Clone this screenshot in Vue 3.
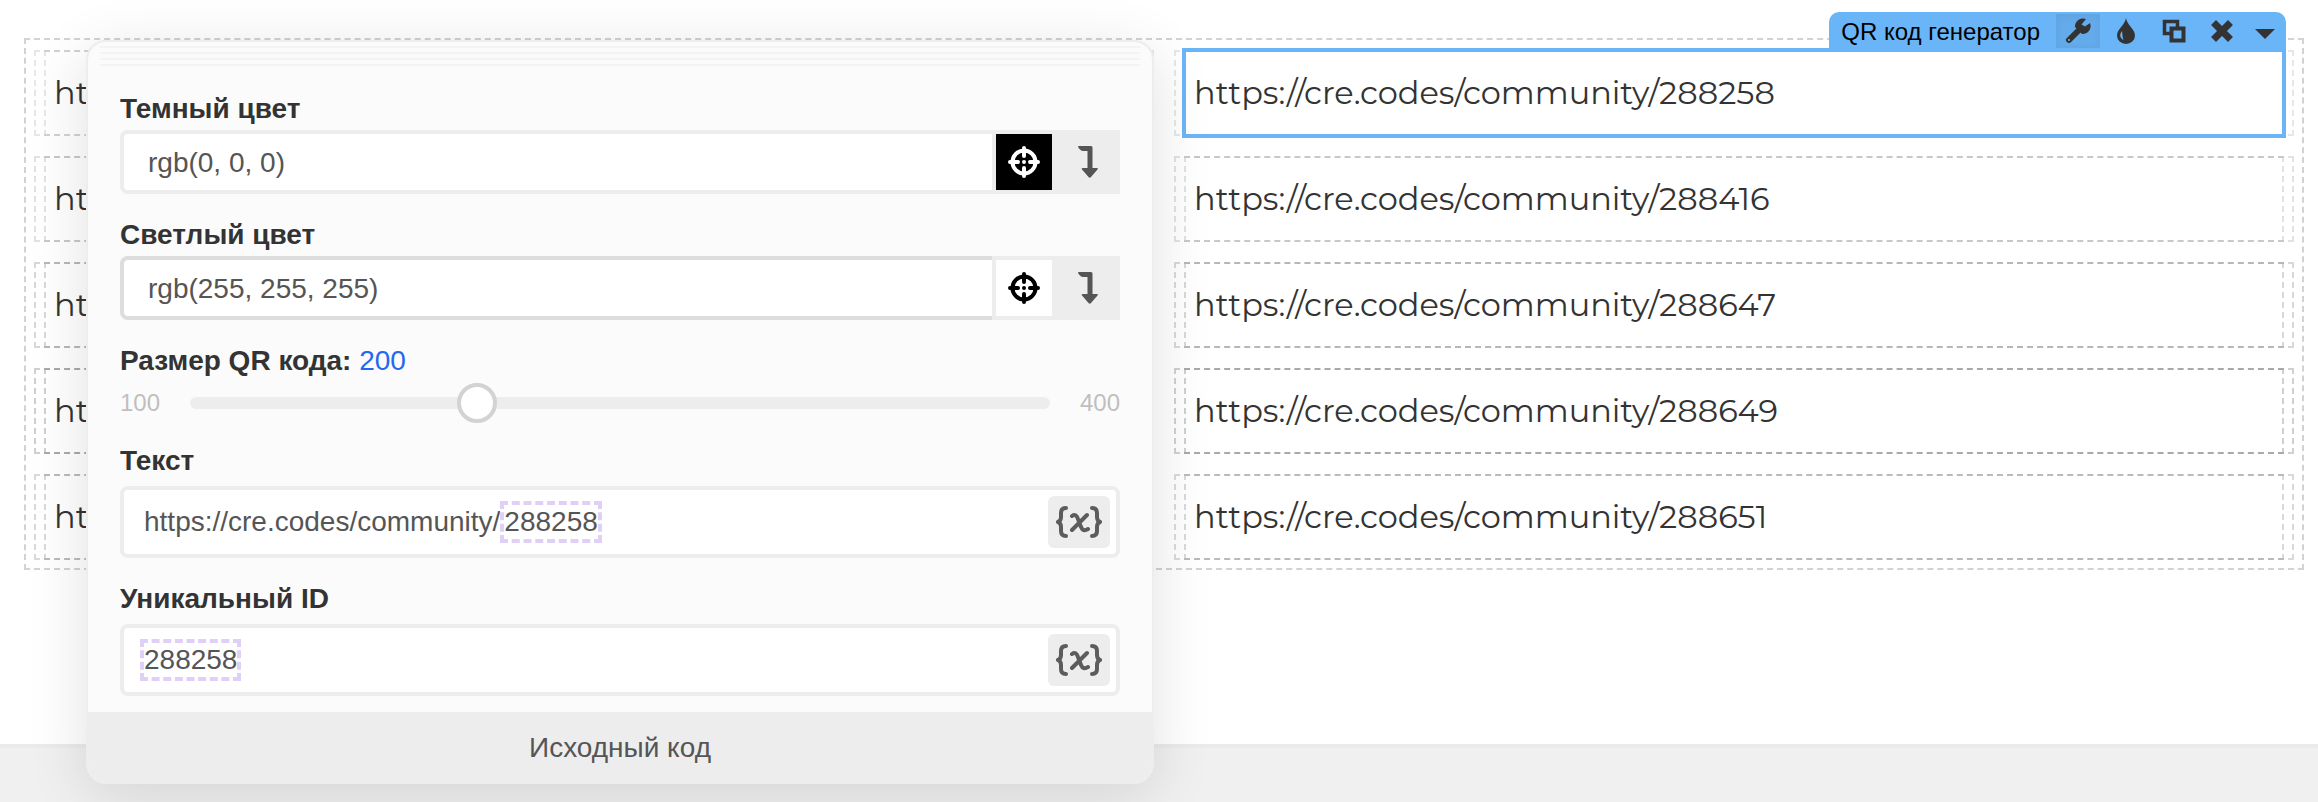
<template>
  <div class="editor">
    <main class="canvas">
      <div class="section">
        <div v-for="row in rows" :key="row.id" class="row" :style="{ '--tone': row.tone }">
          <div v-for="side in ['left', 'right']" :key="side" class="column">
            <div class="block" :class="{ selected: isSelected(row, side) }">
              <span class="block-text">{{ baseUrl }}{{ row.id }}</span>
              <div v-if="isSelected(row, side)" class="toolbar">
                <span class="toolbar-title">QR код генератор</span>
                <button type="button" class="tool active" aria-label="Настройки">
                  <svg width="26" height="26" viewBox="0 0 26 26">
                    <path d="M4 22 15 11" stroke="#333" stroke-width="6" stroke-linecap="round" />
                    <path d="M21 1A8 8 0 0 0 10 9l7 7A8 8 0 0 0 25 5l-5 3.500-3.500-2z" fill="#333" />
                    <circle cx="4" cy="22" r="1" fill="#6ab5f8" />
                  </svg>
                </button>
                <button type="button" class="tool" aria-label="Стиль">
                  <svg width="20" height="28" viewBox="0 0 20 28">
                    <path d="M10 1C9 8 1 12 1 18.500a9 8.500 0 0 0 18 0C19 12 11 8 10 1z" fill="#333" />
                    <path d="M6 14c-3 4-2 7 1.500 9-1-3-1-5-1.500-9z" fill="#6ab5f8" />
                  </svg>
                </button>
                <button type="button" class="tool" aria-label="Копировать">
                  <svg width="24" height="24" viewBox="0 0 24 24" fill="none" stroke="#333">
                    <path d="M8 14.500H2.500v-12h13V8" stroke-width="3.500" />
                    <path d="M9.500 9.500h12v12h-12z" stroke-width="4" />
                  </svg>
                </button>
                <button type="button" class="tool" aria-label="Удалить">
                  <svg width="22" height="22" viewBox="0 0 22 22">
                    <path d="M5 5l12 12M17 5 5 17" stroke="#333" stroke-width="7" stroke-linecap="square" />
                  </svg>
                </button>
                <button type="button" class="tool more" aria-label="Ещё">
                  <svg width="20" height="10" viewBox="0 0 20 10">
                    <path d="M0 0h20L10 10z" fill="#333" />
                  </svg>
                </button>
              </div>
            </div>
          </div>
        </div>
      </div>
    </main>

    <aside class="panel">
      <div class="grip"><i v-for="n in 4" :key="n"></i></div>

      <form class="fields" @submit.prevent>
        <div v-for="color in colors" :key="color.key" class="field">
          <label class="label" :for="color.key">{{ color.label }}</label>
          <div class="color-group">
            <input :id="color.key" v-model="color.value" type="text" class="color-input" :class="color.key">
            <button type="button" class="swatch" :class="color.key" aria-label="Выбрать цвет">
              <svg width="32" height="32" viewBox="0 0 32 32" fill="none" stroke="currentColor" stroke-width="4">
                <circle cx="16" cy="16" r="11.5" />
                <path d="M16 2v8M16 22v8M2 16h8M22 16h8" stroke-linecap="round" />
                <circle cx="16" cy="16" r="2" fill="currentColor" stroke="none" />
              </svg>
            </button>
            <button type="button" class="palette" aria-label="Палитра">
              <svg width="20" height="32" viewBox="0 0 20 32">
                <path d="M1 0h12q1.500 0 1.500 1.500V22H19q1.500 0 .5 1.500L13 31q-1 1.500-2.500 0L4 23.500Q3 22 5 22h4.500V5H5Q2.500 5 0 1q0-1 1-1z" fill="#555" />
              </svg>
            </button>
          </div>
        </div>

        <div class="field size-field">
          <label class="label" for="size">Размер QR кода: <span class="size-value">{{ size }}</span></label>
          <div class="slider">
            <span>100</span>
            <div class="track">
              <input id="size" v-model.number="size" type="range" min="100" max="400">
            </div>
            <span>400</span>
          </div>
        </div>

        <div class="field tagged">
          <label class="label" for="text">Текст</label>
          <div class="tag-box">
            <input id="text" v-model="baseUrl" type="text" class="tag-input fit">
            <span class="tag">{{ selectedId }}</span>
            <span class="spacer"></span>
            <button type="button" class="variable" aria-label="Переменная">
              <svg width="46" height="32" viewBox="0 0 46 32"><path :d="variableIcon" /></svg>
            </button>
          </div>
        </div>

        <div class="field tagged">
          <label class="label" for="uid">Уникальный ID</label>
          <div class="tag-box">
            <span class="tag">{{ selectedId }}</span>
            <input id="uid" type="text" class="tag-input spacer">
            <button type="button" class="variable" aria-label="Переменная">
              <svg width="46" height="32" viewBox="0 0 46 32"><path :d="variableIcon" /></svg>
            </button>
          </div>
        </div>
      </form>

      <button type="button" class="source">Исходный код</button>
    </aside>
  </div>
</template>

<script setup>
import { reactive, ref } from 'vue'

const baseUrl = ref('https://cre.codes/community/')
const selectedId = '288258'
const size = ref(200)

const rows = [
  { id: '288258', tone: 0.09 },
  { id: '288416', tone: 0.11 },
  { id: '288647', tone: 0.15 },
  { id: '288649', tone: 0.18 },
  { id: '288651', tone: 0.14 }
]

const colors = reactive([
  { key: 'dark', label: 'Темный цвет', value: 'rgb(0, 0, 0)' },
  { key: 'light', label: 'Светлый цвет', value: 'rgb(255, 255, 255)' }
])

const variableIcon =
  'M10 2Q5 2 5 7v4q0 4-3 5 3 1 3 5v4q0 5 5 5M36 2q5 0 5 5v4q0 4 3 5-3 1-3 5v4q0 5-5 5' +
  'M31 9 16 24M16 10q4-3 6 3l3 8q2 5 7 2'

function isSelected(row, side) {
  return side === 'right' && row.id === selectedId
}
</script>

<style>
body {
  margin: 0;
  background: #f0f0f0;
}
</style>

<style scoped>
.editor {
  position: relative;
  min-height: 100vh;
  overflow: hidden;
  font-family: "Helvetica Neue", "Liberation Sans", Arial, sans-serif;
  color: #333;
}

.editor * {
  box-sizing: border-box;
}

button,
input {
  margin: 0;
  padding: 0;
  border: 0;
  font: inherit;
  color: inherit;
  background: none;
  outline: none;
}

svg {
  display: block;
}

.canvas {
  padding: 38px 14px 174px 24px;
  border-bottom: 4px solid #ebebeb;
  background: #fff;
}

.section {
  display: flex;
  flex-direction: column;
  gap: 20px;
  padding: 10px 8px 8px;
  border: 2px dashed #d2d2d2;
}

.row {
  display: grid;
  grid-template-columns: 1fr 1fr;
  gap: 20px;
}

.column {
  padding: 0 10px;
  outline: 2px dashed rgba(0, 0, 0, var(--tone));
  outline-offset: -2px;
}

.block {
  position: relative;
  padding: 20px 10px;
  outline: 2px dashed rgba(0, 0, 0, var(--tone));
  outline-offset: -2px;
}

.block-text {
  display: block;
  font-family: Montserrat, Inter, sans-serif;
  font-size: 32px;
  line-height: 46px;
  white-space: nowrap;
}

.selected::before {
  content: "";
  position: absolute;
  inset: -2px;
  border: 4px solid #6ab5f8;
}

.toolbar {
  position: absolute;
  right: -2px;
  bottom: 100%;
  display: flex;
  gap: 4px;
  height: 38px;
  padding: 2px 4px 2px 12px;
  border-radius: 10px 10px 0 0;
  background: #6ab5f8;
}

.toolbar-title {
  margin-right: 12px;
  font-size: 24px;
  line-height: 36px;
  color: #000;
  white-space: nowrap;
}

.tool {
  display: flex;
  align-items: center;
  justify-content: center;
  width: 44px;
}

.tool.active {
  background: #64abec;
  box-shadow: inset 0 2px 8px rgba(0, 0, 0, 0.06);
}

.tool.more {
  width: 34px;
  padding-top: 6px;
}

.panel {
  position: absolute;
  top: 40px;
  left: 86px;
  width: 1068px;
  max-width: calc(100% - 172px);
  box-sizing: border-box;
  border: 2px solid #ededed;
  border-radius: 20px;
  background: #fbfbfb;
  box-shadow: 0 12px 60px rgba(0, 0, 0, 0.12);
  font-size: 28px;
  line-height: 34px;
  overflow: hidden;
}

.grip {
  display: grid;
  gap: 4px;
  padding: 4px 12px 26px;
}

.grip i {
  height: 2px;
  background: #f3f3f3;
}

.fields {
  padding: 0 32px 16px;
}

.field {
  display: flex;
  flex-direction: column;
  gap: 4px;
  margin-bottom: 24px;
}

.size-field {
  margin-bottom: 20px;
}

.tagged {
  gap: 8px;
}

.field:last-child {
  margin-bottom: 0;
}

.label {
  font-weight: 700;
}

.color-group {
  display: flex;
  height: 64px;
  border-radius: 8px 0 0 8px;
  background: #ededed;
}

.color-input {
  flex: 1;
  min-width: 0;
  padding: 2px 24px 0;
  border: 4px solid #ededed;
  border-right: 0;
  border-radius: 8px 0 0 8px;
  background: #fff;
  color: #555;
}

.color-input.light {
  border-color: #ddd;
}

.swatch {
  display: flex;
  align-items: center;
  justify-content: center;
  width: 56px;
  margin: 4px 0 4px 4px;
}

.swatch.dark {
  background: #000;
  color: #fff;
}

.swatch.light {
  background: #fff;
  color: #000;
}

.palette {
  display: flex;
  align-items: center;
  justify-content: center;
  width: 68px;
  padding-left: 4px;
}

.size-value {
  font-weight: 400;
  color: #2567f0;
}

.slider {
  display: flex;
  align-items: center;
  gap: 30px;
  height: 42px;
  font-size: 24px;
  color: #bfbfbf;
}

.track {
  flex: 1;
  height: 12px;
  border-radius: 6px;
  background: #ededed;
}

/* the input overhangs the track by half a thumb on each side */
.track input {
  display: block;
  appearance: none;
  width: calc(100% + 40px);
  height: 40px;
  margin: -14px -20px;
}

.track input::-webkit-slider-thumb {
  appearance: none;
  box-sizing: border-box;
  width: 40px;
  height: 40px;
  border: 4px solid #d3d3d3;
  border-radius: 50%;
  background: #fff;
}

.tag-box {
  display: flex;
  align-items: center;
  height: 72px;
  padding: 0 6px 0 16px;
  border: 4px solid #ededed;
  border-radius: 8px;
  background: #fff;
  color: #555;
}

.tag-input {
  min-width: 0;
  height: 42px;
  padding-left: 4px;
}

.tag-input.fit {
  field-sizing: content;
}

.tag {
  border: 4px dashed #dfd0f7;
}

.spacer {
  flex: 1;
}

.variable {
  display: flex;
  align-items: center;
  justify-content: center;
  width: 62px;
  height: 52px;
  border-radius: 6px;
  background: #ededed;
}

.variable path {
  fill: none;
  stroke: #5c5c5c;
  stroke-width: 4;
  stroke-linecap: round;
  stroke-linejoin: round;
}

.source {
  display: block;
  width: 100%;
  height: 70px;
  padding-top: 2px;
  background: #ededed;
  color: #555;
}
</style>
